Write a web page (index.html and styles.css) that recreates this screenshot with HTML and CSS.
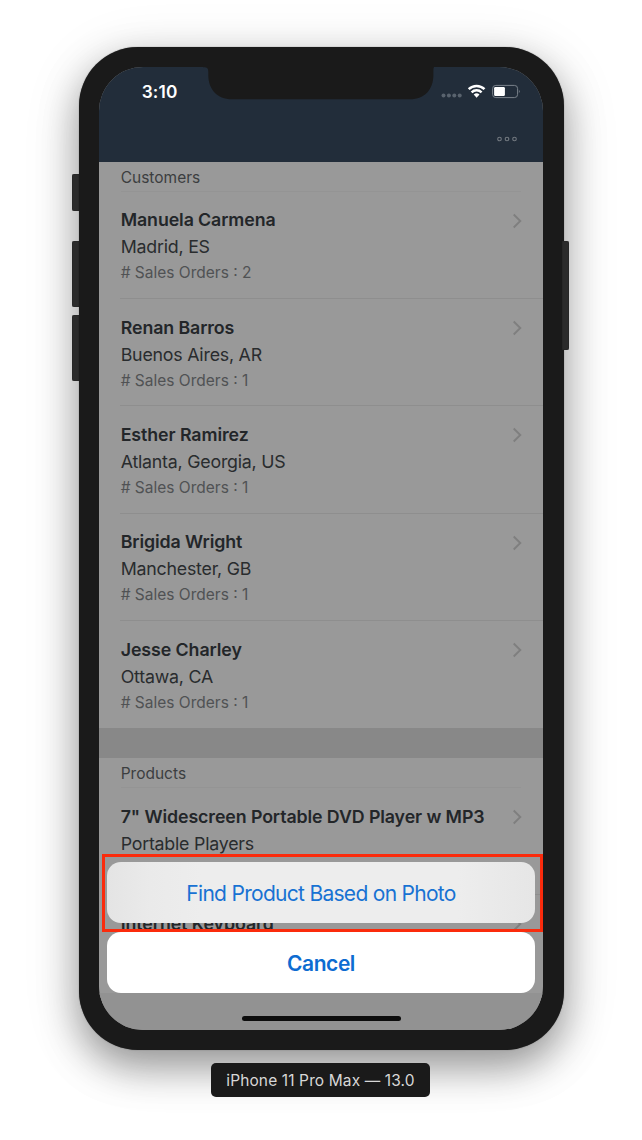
FILE: index.html
```
<!DOCTYPE html>
<html lang="en">
<head>
<meta charset="utf-8">
<title>iPhone 11 Pro Max — 13.0</title>
<link rel="stylesheet" href="styles.css">
</head>
<body>
<svg width="0" height="0" class="defs"><symbol id="chevron" viewBox="0 0 10 16"><path d="M1.700 1.500 8.300 8l-6.600 6.500" fill="none" stroke="#7f7f7f" stroke-width="1.900"/></symbol></svg>
<main class="simulator">
  <div class="phone">
    <i class="key key-mute"></i><i class="key key-up"></i><i class="key key-down"></i><i class="key key-power"></i>
    <div class="screen">
      <header class="navbar">
        <div class="status">
          <span class="clock">3:10</span>
          <svg class="signals" width="82" height="18" viewBox="0 0 82 18">
            <g fill="#59636e"><circle cx="4.500" cy="13.500" r="2"/><circle cx="9.900" cy="13.500" r="2"/><circle cx="15.300" cy="13.500" r="2"/><circle cx="20.700" cy="13.500" r="2"/></g>
            <g transform="translate(1.500 0)">
            <g fill="none" stroke="#fff" stroke-width="2.500"><path d="M28.200 7.200a11.400 11.400 0 0 1 15.800 0"/><path d="M31.100 10.300a7.300 7.300 0 0 1 10 0"/></g>
            <path fill="#fff" d="M33.200 12.500a4.300 4.300 0 0 1 5.800 0l-2.900 3.200z"/>
            </g>
            <rect x="53.600" y="3.400" width="25" height="12.200" rx="3.200" fill="none" stroke="#7a828b"/>
            <rect x="55.100" y="4.900" width="10.800" height="9.200" rx="1.400" fill="#fff"/>
            <path d="M79.900 7.500q1.800 1.900 0 3.800z" fill="#7a828b"/>
          </svg>
        </div>
        <svg class="more" width="22" height="8" viewBox="0 0 22 8"><g fill="none" stroke="#737980" stroke-width="1.100"><circle cx="3.500" cy="4" r="1.800"/><circle cx="11" cy="4" r="1.800"/><circle cx="18.500" cy="4" r="1.800"/></g></svg>
      </header>
      <section class="group">
        <h2 class="heading">Customers</h2>
        <article class="row"><h3>Manuela Carmena</h3><p class="place">Madrid, ES</p><p class="orders"># Sales Orders : 2</p><svg class="chevron"><use href="#chevron"/></svg></article>
        <article class="row"><h3>Renan Barros</h3><p class="place">Buenos Aires, AR</p><p class="orders"># Sales Orders : 1</p><svg class="chevron"><use href="#chevron"/></svg></article>
        <article class="row"><h3>Esther Ramirez</h3><p class="place">Atlanta, Georgia, US</p><p class="orders"># Sales Orders : 1</p><svg class="chevron"><use href="#chevron"/></svg></article>
        <article class="row"><h3>Brigida Wright</h3><p class="place">Manchester, GB</p><p class="orders"># Sales Orders : 1</p><svg class="chevron"><use href="#chevron"/></svg></article>
        <article class="row last"><h3>Jesse Charley</h3><p class="place">Ottawa, CA</p><p class="orders"># Sales Orders : 1</p><svg class="chevron"><use href="#chevron"/></svg></article>
      </section>
      <section class="group">
        <h2 class="heading">Products</h2>
        <article class="row"><h3>7" Widescreen Portable DVD Player w MP3</h3><p class="place">Portable Players</p><svg class="chevron"><use href="#chevron"/></svg></article>
        <article class="row last"><h3>Internet Keyboard</h3><svg class="chevron"><use href="#chevron"/></svg></article>
      </section>
      <div class="toolbar"></div>
      <div class="sheet">
        <button class="action">Find Product Based on Photo</button>
        <button class="cancel">Cancel</button>
      </div>
      <div class="highlight"></div>
      <div class="home"></div>
      <svg class="notch" width="231" height="33" viewBox="0 0 231 33"><path fill="#1a1a1a" d="M0 0v.300h1.500Q5.300.300 5.300 4.500V8C5.300 22 14 32.300 29 32.300H207C222 32.300 230.400 22 230.400 8V4.500Q230.400.300 231 .300V0z"/></svg>
    </div>
  </div>
  <div class="device-name">iPhone 11 Pro Max — 13.0</div>
</main>
</body>
</html>
```
FILE: styles.css
```
* { box-sizing: border-box; }
body { margin: 0; background: #fff; font-family: Inter, "Liberation Sans", sans-serif; }
h2, h3, p { margin: 0; }
.defs { position: absolute; }
.simulator { width: 642px; height: 1140px; padding-top: 46.500px; display: flex; flex-direction: column; align-items: center; overflow: hidden; }
.phone { position: relative; width: 485px; height: 1003.300px; padding: 20.500px 20.200px; background: #1a1a1a; border-radius: 59px; box-shadow: 0 0 1px #555, 0 17px 38px rgba(0,0,0,.36), 0 10px 60px rgba(0,0,0,.12); }
.key { position: absolute; width: 7px; left: -6.500px; background: #2b2b2b; border-radius: 2px 0 0 2px; box-shadow: inset 0 0 1px #111; }
.key-mute { top: 127px; height: 37.500px; }
.key-up { top: 194px; height: 66px; }
.key-down { top: 268.500px; height: 66px; }
.key-power { left: auto; right: -5.500px; top: 194.500px; height: 109px; border-radius: 0 2px 2px 0; }
.screen { position: relative; height: 962.500px; overflow: hidden; border-radius: 44px; background: #888; }
.navbar { height: 95px; background: #222d3a; display: flex; flex-direction: column; }
.status { height: 48px; padding: 13px 22px 0 43px; display: flex; justify-content: space-between; align-items: flex-start; color: #fff; }
.clock { font-size: 17.300px; line-height: 24px; font-weight: 600; letter-spacing: .15px; }
.signals { margin-top: 2px; }
.more { margin: 20px 25px 0 auto; }
.group { background: #999; margin-bottom: 30px; }
.heading { height: 29.500px; margin-left: 22px; width: 400px; font-size: 15.500px; font-weight: 400; line-height: 31px; color: #3c3e40; border-bottom: 1px solid #949494; }
.row { position: relative; height: 107.400px; margin-left: 21.500px; padding: 14.800px 0 0 .500px; border-bottom: 1px solid #8e8e8e; white-space: nowrap; }
.row.last { border-bottom: 0; }
.row h3 { font-size: 17.800px; font-weight: 600; line-height: 27px; letter-spacing: -.1px; color: #232629; }
.row:last-child h3, .row:nth-child(4) h3 { letter-spacing: -.08px; }
.place { font-size: 17.800px; line-height: 27px; letter-spacing: -.22px; color: #292c2e; }
.orders { font-size: 15.500px; line-height: 25.600px; color: #505254; }
.chevron { position: absolute; width: 10px; height: 16px; right: 21px; top: 21px; }
.toolbar { position: absolute; left: 0; right: 0; bottom: 0; height: 37px; background: #929292; }
.sheet { position: absolute; left: 8.700px; right: 8.700px; bottom: 36.500px; display: flex; flex-direction: column; gap: 8.800px; }
.sheet button { height: 61.200px; border: 0; padding: 0; border-radius: 14px; font: 400 21px/62px Inter, sans-serif; letter-spacing: -.45px; color: #1872d3; background: #fff; }
.sheet .action { padding-top: 1px; letter-spacing: -.71px; background: linear-gradient(90deg, #e4e4e4, #eaeaea 10%, #ededed 22%, #ededed 82%, #e6e6e6); }
.sheet .cancel { padding-top: 1px; font-weight: 600; color: #0d6cd1; }
.highlight { position: absolute; left: 3.200px; top: 787px; width: 441px; height: 77.500px; border: 3.500px solid #fb2b0c; }
.home { position: absolute; left: 143px; bottom: 8.500px; width: 159px; height: 5.500px; border-radius: 3px; background: #0d0d0d; }
.notch { position: absolute; left: 104px; top: -.300px; }
.device-name { flex: none; margin: 13px 1px 0 0; width: 219px; height: 34px; border-radius: 5px; background: #1a1a1a; color: #d7d7d7; font-size: 15.500px; letter-spacing: .12px; line-height: 35px; text-align: center; white-space: nowrap; position: relative; }
```
